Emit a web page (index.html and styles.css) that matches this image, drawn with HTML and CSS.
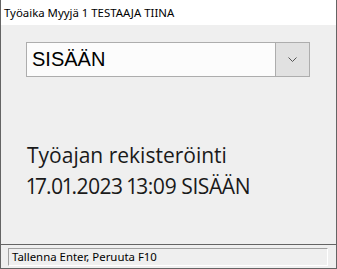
FILE: index.html
```html
<!DOCTYPE html>
<html lang="fi">
<head>
    <meta charset="UTF-8">
    <title>Työaika</title>
    <link rel="stylesheet" href="styles.css">
</head>
<body>
    <div class="window">
        <!-- Title bar -->
        <div class="title-bar">Työaika Myyjä 1 TESTAAJA TIINA</div>

        <!-- Main content -->
        <div class="content">
            <div class="combo">
                <div class="combo-value">SISÄÄN</div>
                <div class="combo-button">
                    <svg width="9" height="5" viewBox="0 0 9 5">
                        <path d="M0.5 0.5 L4.5 4.5 L8.5 0.5" fill="none" stroke="#555" stroke-width="1"/>
                    </svg>
                </div>
            </div>

            <div class="info">
                <div>Työajan rekisteröinti</div>
                <div class="info-date">17.01.2023 13:09 SISÄÄN</div>
            </div>
        </div>

        <!-- Status bar -->
        <div class="status-bar">
            <div class="status-panel">Tallenna Enter, Peruuta F10</div>
        </div>
    </div>
</body>
</html>
```

FILE: styles.css
```css
:root {
    --window-bg: #efefef;
    --frame: #646464;
    --combo-border: #adadad;
}

body {
    margin: 0;
    font-family: "Liberation Sans", Arial, sans-serif;
}

.window {
    width: 337px;
    height: 269px;
    box-sizing: border-box;
    border-left: 1px solid var(--frame);
    border-right: 1px solid var(--frame);
    border-bottom: 1px solid var(--frame);
    background-color: var(--window-bg);
    display: flex;
    flex-direction: column;
}

/* Title bar */
.title-bar {
    height: 25px;
    background-color: #ffffff;
    padding-left: 3px;
    font-family: "Noto Sans", sans-serif;
    font-size: 11.4px;
    line-height: 25px;
    color: #000000;
}

/* Main content */
.content {
    flex: 1;
    padding: 17px 0 0 25px;
}

.combo {
    width: 284px;
    height: 35px;
    box-sizing: border-box;
    border: 1px solid var(--combo-border);
    display: flex;
}

.combo-value {
    flex: 1;
    background-color: #fcfcfc;
    padding-left: 5px;
    font-size: 20px;
    line-height: 33px;
    color: #000000;
}

.combo-button {
    width: 33px;
    background-color: #e1e1e1;
    border-left: 1px solid var(--combo-border);
    display: flex;
    align-items: center;
    justify-content: center;
}

.info {
    margin-top: 63px;
    padding-left: 1px;
    font-family: "Open Sans", sans-serif;
    font-size: 21px;
    line-height: 31px;
    color: #1a1a1a;
    font-variant-numeric: proportional-nums;
}

.info-date {
    letter-spacing: -0.4px;
}

/* Status bar */
.status-bar {
    border-top: 1px solid var(--frame);
    padding: 3px 8px 2px 7px;
}

.status-panel {
    height: 16px;
    border-top: 1px solid #a0a0a0;
    border-left: 1px solid #a0a0a0;
    border-right: 1px solid #ffffff;
    border-bottom: 1px solid #ffffff;
    padding-left: 3px;
    font-family: "Noto Sans", sans-serif;
    font-size: 11.4px;
    line-height: 16px;
    color: #000000;
}
```
